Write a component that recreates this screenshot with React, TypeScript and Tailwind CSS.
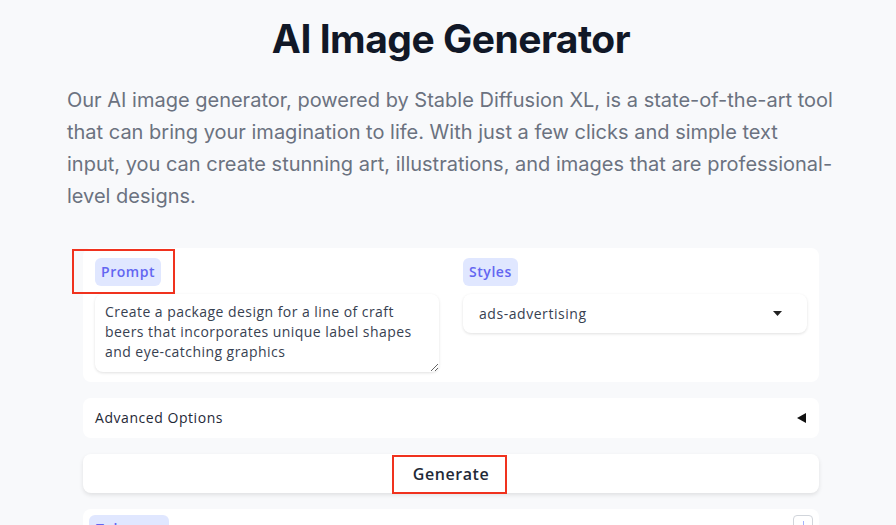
import React from "react";

const App: React.FC = () => {
  return (
    <div className="min-h-screen w-full bg-[#f8f9fb] pt-4 pl-[6px] font-['Inter',sans-serif]">
      <div className="mx-auto max-w-3xl">
        <h1 className="text-center text-[39px] leading-[46px] font-bold tracking-[-0.5px] text-[#111827]">
          AI Image Generator
        </h1>
        <p className="mt-[22px] text-xl leading-8 text-[#6b7280]">
          Our AI image generator, powered by Stable Diffusion XL, is a
          state-of-the-art tool that can bring your imagination to life. With
          just a few clicks and simple text input, you can create stunning art,
          illustrations, and images that are professional-level designs.
        </p>

        <div className="mt-9 space-y-4 px-4 font-['Open_Sans',sans-serif] tracking-[0.55px]">
          {/* prompt + styles */}
          <div className="grid grid-cols-2 gap-6 rounded-lg bg-white px-3 pt-[10px] pb-[10px]">
            <div>
              <div className="relative inline-block">
                <span className="inline-flex h-7 items-center rounded-md bg-[#e0e7ff] px-[6px] text-sm font-semibold text-[#6366f1]">
                  Prompt
                </span>
                <span className="pointer-events-none absolute -top-[9px] -left-[23px] -right-[14px] -bottom-[8px] border-2 border-[#f0321e]" />
              </div>
              <textarea
                readOnly
                className="mt-2 block h-[78px] w-full resize-y rounded-lg bg-white px-[10px] pt-[8px] text-sm leading-5 tracking-[0.45px] text-[#374151] shadow-[0_1px_3px_rgba(0,0,0,0.12)] outline-none"
                value="Create a package design for a line of craft beers that incorporates unique label shapes and eye-catching graphics"
              />
            </div>
            <div>
              <span className="inline-flex h-7 items-center rounded-md bg-[#e0e7ff] px-[6px] text-sm font-semibold text-[#6366f1]">
                Styles
              </span>
              <div className="mt-2 flex h-[39px] items-center justify-between rounded-lg bg-white pl-4 pr-[25px] text-sm text-[#374151] shadow-[0_1px_3px_rgba(0,0,0,0.12)]">
                <span>ads-advertising</span>
                <svg width="9" height="5" viewBox="0 0 9 5">
                  <path d="M0 0h9L4.5 5z" fill="#222" />
                </svg>
              </div>
            </div>
          </div>

          {/* advanced */}
          <div className="flex h-10 items-center justify-between rounded-lg bg-white pl-3 pr-[13px] text-sm text-[#1f2937]">
            <span>Advanced Options</span>
            <svg width="9" height="10" viewBox="0 0 9 10">
              <path d="M9 0v10L0 5z" fill="#111" />
            </svg>
          </div>

          {/* generate */}
          <div className="flex h-[39px] items-center justify-center rounded-lg bg-white shadow-[0_2px_4px_rgba(0,0,0,0.1)]">
            <div className="relative">
              <span className="text-base font-semibold text-[#1f2937]">Generate</span>
              <span className="pointer-events-none absolute -top-[7px] -left-[21px] -right-[18px] -bottom-[8px] border-2 border-[#f0321e]" />
            </div>
          </div>

          {/* tokens */}
          <div className="flex h-[60px] items-start justify-between rounded-lg bg-white pt-[6px] pl-[6px] pr-[6px]">
            <span className="inline-flex h-7 w-20 items-center rounded-md bg-[#e0e7ff] px-[7px] text-sm font-semibold text-[#6366f1]">
              Tokens
            </span>
            <span className="flex h-6 w-5 justify-center rounded border border-[#d1d5db] pt-[5px]">
              <span className="h-3 w-px bg-[#a5b4fc]" />
            </span>
          </div>
        </div>
      </div>
    </div>
  );
};

export default App;
